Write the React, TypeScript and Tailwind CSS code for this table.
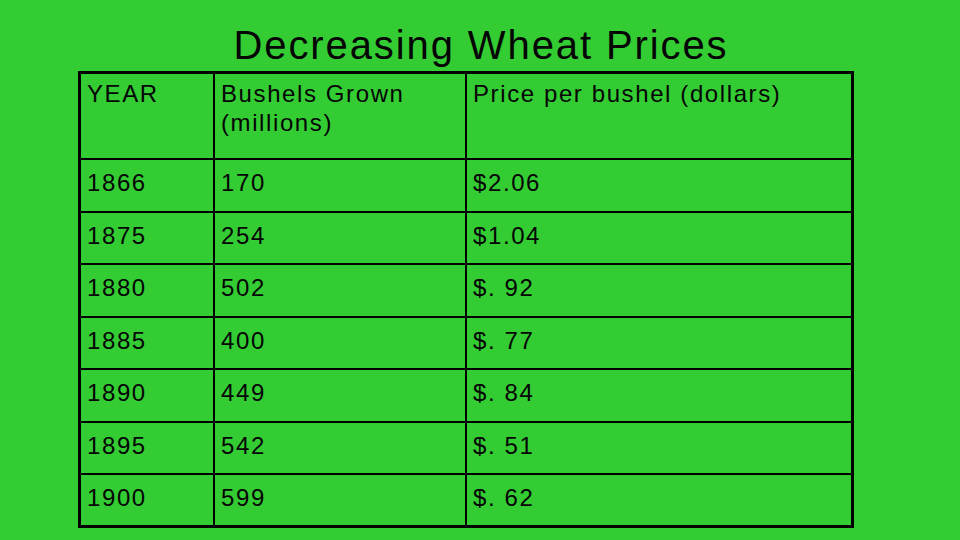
const rows = [
  ['1866', '170', '$2.06'],
  ['1875', '254', '$1.04'],
  ['1880', '502', '$. 92'],
  ['1885', '400', '$. 77'],
  ['1890', '449', '$. 84'],
  ['1895', '542', '$. 51'],
  ['1900', '599', '$. 62'],
];

export default function App() {
  return (
    <div
      className="w-[960px] h-[540px] bg-[#33cc33] text-[#050505] overflow-hidden"
      style={{ fontFamily: '"Liberation Sans", Arial, sans-serif' }}
    >
      <div className="h-[71px] pt-[22px] pl-[2px] text-center text-[40px] leading-[46px] tracking-[1.9px]">
        Decreasing Wheat Prices
      </div>
      <div className="ml-[78px] w-[776px] border-[3px] border-black text-[24px] leading-[29px] tracking-[1.6px]">
        <div className="flex h-[86px] border-b-2 border-black">
          <div className="w-[132px] pl-[6px] pt-[5px]">YEAR</div>
          <div className="w-[252px] border-l-2 border-black pl-[6px] pt-[5px]">
            Bushels Grown
            <br />
            (millions)
          </div>
          <div className="flex-1 border-l-2 border-black pl-[6px] pt-[5px]">
            Price per bushel (dollars)
          </div>
        </div>
        {rows.map((r, i) => (
          <div
            key={r[0]}
            className={
              i < rows.length - 1
                ? 'flex h-[52.5px] border-b-2 border-black'
                : 'flex h-[50px]'
            }
          >
            <div className="w-[132px] pl-[6px] pt-[8px]">{r[0]}</div>
            <div className="w-[252px] border-l-2 border-black pl-[6px] pt-[8px]">{r[1]}</div>
            <div className="flex-1 border-l-2 border-black pl-[6px] pt-[8px]">{r[2]}</div>
          </div>
        ))}
      </div>
    </div>
  );
}
